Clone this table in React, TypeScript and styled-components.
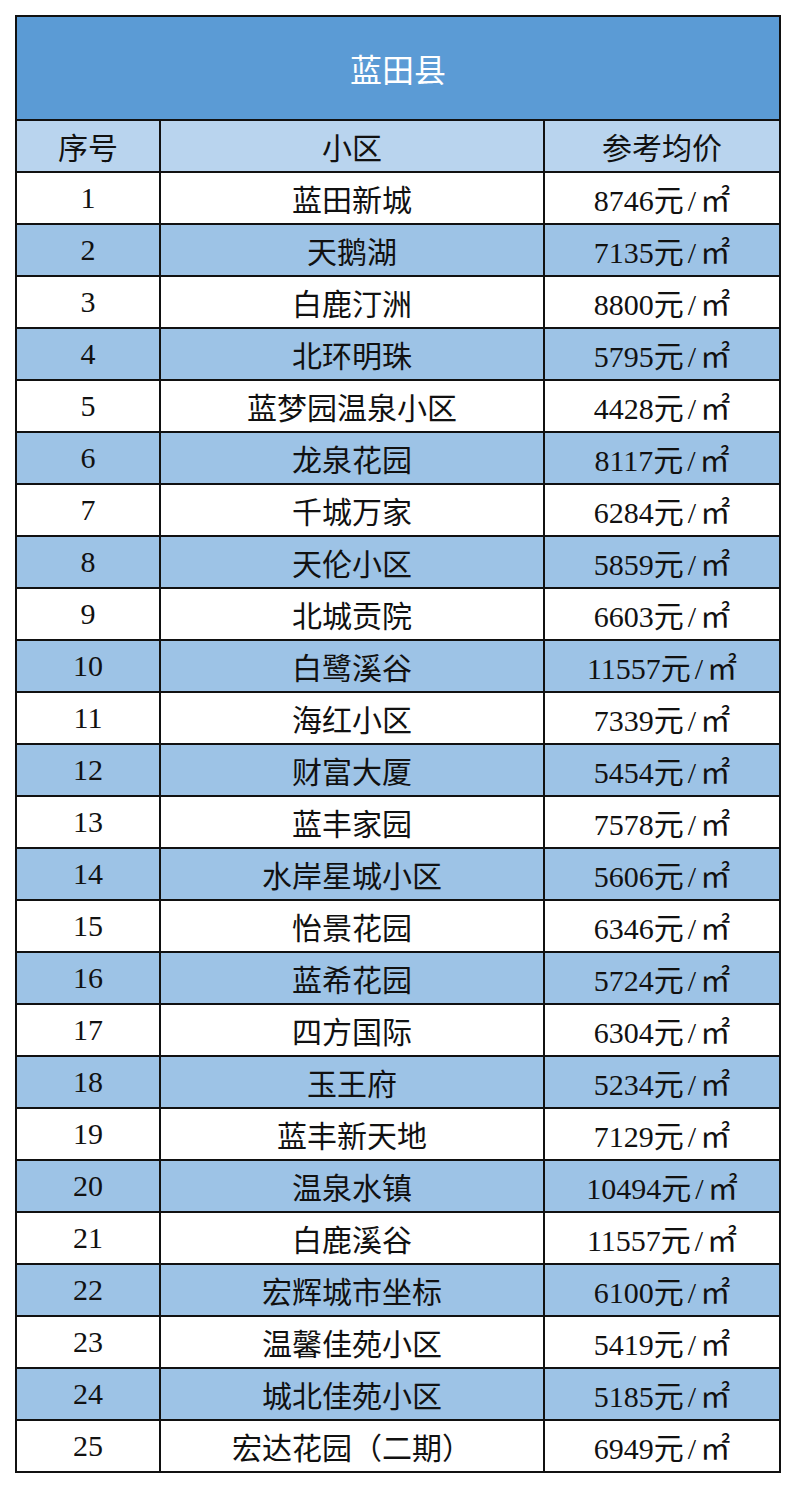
import React from 'react';
import styled, {createGlobalStyle} from "styled-components";

const GlobalStyle = createGlobalStyle`
  html, body {
    margin: 0;
    padding: 0;
    background: #ffffff;
  }
`

type Row = { name: string; price: string }

const rows: Row[] = [
    {name: '蓝田新城', price: '8746'},
    {name: '天鹅湖', price: '7135'},
    {name: '白鹿汀洲', price: '8800'},
    {name: '北环明珠', price: '5795'},
    {name: '蓝梦园温泉小区', price: '4428'},
    {name: '龙泉花园', price: '8117'},
    {name: '千城万家', price: '6284'},
    {name: '天伦小区', price: '5859'},
    {name: '北城贡院', price: '6603'},
    {name: '白鹭溪谷', price: '11557'},
    {name: '海红小区', price: '7339'},
    {name: '财富大厦', price: '5454'},
    {name: '蓝丰家园', price: '7578'},
    {name: '水岸星城小区', price: '5606'},
    {name: '怡景花园', price: '6346'},
    {name: '蓝希花园', price: '5724'},
    {name: '四方国际', price: '6304'},
    {name: '玉王府', price: '5234'},
    {name: '蓝丰新天地', price: '7129'},
    {name: '温泉水镇', price: '10494'},
    {name: '白鹿溪谷', price: '11557'},
    {name: '宏辉城市坐标', price: '6100'},
    {name: '温馨佳苑小区', price: '5419'},
    {name: '城北佳苑小区', price: '5185'},
    {name: '宏达花园（二期）', price: '6949'},
]

export default function App() {
    return (
        <Page>
            <GlobalStyle/>
            <Table>
                <colgroup>
                    <col style={{width: '144px'}}/>
                    <col style={{width: '384px'}}/>
                    <col style={{width: '236px'}}/>
                </colgroup>
                <thead>
                <tr>
                    <TitleCell colSpan={3}>蓝田县</TitleCell>
                </tr>
                <HeadRow>
                    <Cell>序号</Cell>
                    <Cell>小区</Cell>
                    <Cell>参考均价</Cell>
                </HeadRow>
                </thead>
                <tbody>
                {rows.map((r, i) => (
                    <BodyRow key={i} $striped={i % 2 === 1}>
                        <Cell>{i + 1}</Cell>
                        <Cell>{r.name}</Cell>
                        <Cell>{r.price}元<Slash>/</Slash>㎡</Cell>
                    </BodyRow>
                ))}
                </tbody>
            </Table>
        </Page>
    );
}

const Page = styled.div`
  padding: 15px 14px 15px 15px;
  font-family: "Liberation Serif", "Noto Sans CJK SC", serif;
  color: #111111;
`

const Table = styled.table`
  border-collapse: collapse;
  table-layout: fixed;
  width: 766px;
  border: 2px solid #111111;
`

const TitleCell = styled.th`
  height: 102px;
  padding: 0;
  background: #5b9bd5;
  color: #ffffff;
  font-size: 32px;
  font-weight: 400;
  text-align: center;
  border: 2px solid #111111;
`

const Cell = styled.td`
  padding: 0;
  height: 50px;
  font-size: 30px;
  font-weight: 400;
  text-align: center;
  vertical-align: middle;
  border: 2px solid #111111;
  white-space: nowrap;
`

const Slash = styled.span`
  margin: 0 4px;
`

const HeadRow = styled.tr`
  background: #b9d4ee;
`

const BodyRow = styled.tr<{ $striped: boolean }>`
  background: ${p => p.$striped ? '#9dc3e6' : '#ffffff'};
`
